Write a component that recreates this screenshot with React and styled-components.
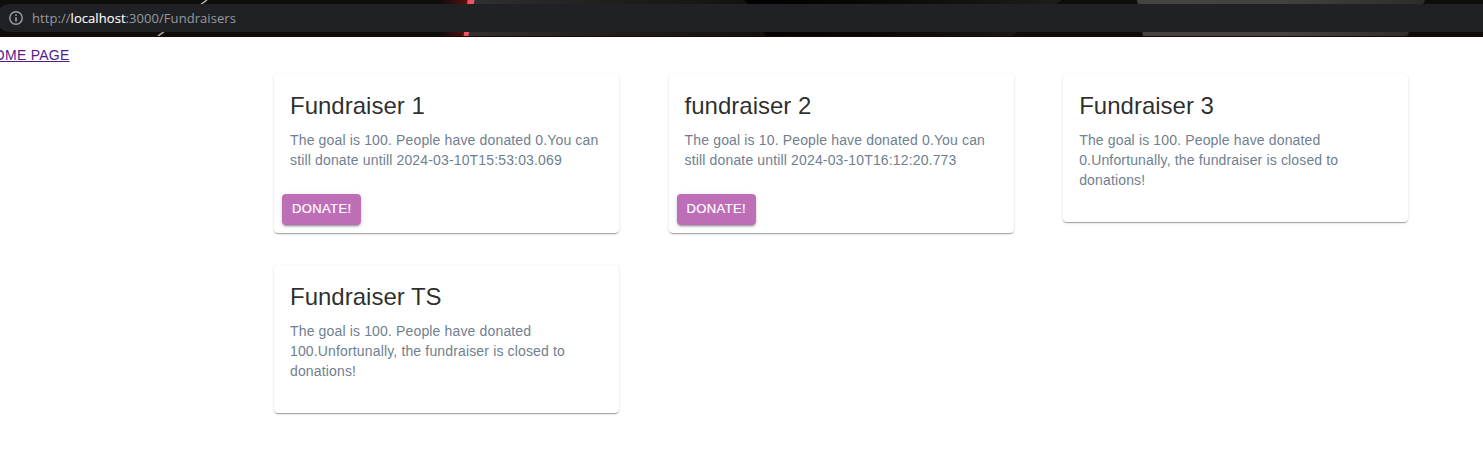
import React from "react";
import styled, { createGlobalStyle } from "styled-components";

const GlobalStyle = createGlobalStyle`
  * { box-sizing: border-box; }
  body {
    margin: 0;
    background: #fff;
    overflow: hidden;
    font-family: "Liberation Sans", Arial, sans-serif;
  }
`;

const BrowserBar = styled.header`
  position: relative;
  height: 37px;
  padding: 4px 0;
  background: #0d0d0c;
  border-bottom: 1px solid #240202;
  overflow: hidden;
`;

const ThemeArt = styled.svg`
  position: absolute;
  inset: 0;
  display: block;
`;

const AddressField = styled.div`
  position: relative;
  display: flex;
  align-items: center;
  height: 28px;
  margin-left: -4px;
  padding-left: 12px;
  border-radius: 14px 0 0 14px;
  background: #202124;
`;

const InfoIcon = styled.svg`
  display: block;
  width: 16px;
  height: 16px;
  margin-right: 8px;
`;

const Url = styled.span`
  font: 13px/18px "Open Sans", "Noto Sans", sans-serif;
  letter-spacing: 0.06px;
  color: #969a9e;
  white-space: nowrap;
`;

const Host = styled.span`
  color: #fff;
  -webkit-text-stroke: 0.1px #fff;
`;

const HomeLink = styled.a`
  display: block;
  width: max-content;
  margin: 8px 0 0 -16.5px;
  font-size: 14px;
  line-height: 20px;
  letter-spacing: 0.25px;
  color: #551a8b;
  text-decoration: underline;
`;

const CardGrid = styled.main`
  display: grid;
  grid-template-columns: repeat(3, 345px);
  grid-auto-rows: 159px;
  column-gap: 49.6px;
  row-gap: 32px;
  align-items: start;
  margin: 9px 0 0 274px;
`;

const Card = styled.article`
  border-radius: 4px;
  background: #fff;
  box-shadow: 0 2px 1px -1px rgba(0, 0, 0, 0.2), 0 1px 1px 0 rgba(0, 0, 0, 0.14),
    0 1px 3px 0 rgba(0, 0, 0, 0.12);
`;

const CardContent = styled.div`
  padding: 16px;
`;

const Title = styled.h2`
  margin: 0 0 0.35em;
  font-size: 24px;
  font-weight: 400;
  line-height: 1.334;
  color: rgba(0, 0, 0, 0.84);
`;

const Description = styled.p`
  margin: 0;
  font-size: 14px;
  line-height: 1.43;
  letter-spacing: 0.01071em;
  color: #708090;
`;

const CardActions = styled.div`
  display: flex;
  align-items: center;
  padding: 8px;
`;

const DonateButton = styled.button`
  min-width: 64px;
  padding: 3.500px 10px 4.500px;
  border: 0;
  border-radius: 4px;
  background: #be6db7;
  color: #fff;
  font-family: inherit;
  font-size: 13px;
  font-weight: 500;
  line-height: 1.75;
  letter-spacing: 0.02857em;
  text-transform: uppercase;
  -webkit-text-stroke: 0.2px #fff;
  box-shadow: 0 3px 1px -2px rgba(0, 0, 0, 0.2), 0 2px 2px 0 rgba(0, 0, 0, 0.14),
    0 1px 5px 0 rgba(0, 0, 0, 0.12);
`;

const fundraisers = [
  { name: "Fundraiser 1", goal: 100, donated: 0, until: "2024-03-10T15:53:03.069" },
  { name: "fundraiser 2", goal: 10, donated: 0, until: "2024-03-10T16:12:20.773" },
  { name: "Fundraiser 3", goal: 100, donated: 0 },
  { name: "Fundraiser TS", goal: 100, donated: 100 },
];

function FundraiserCard({ name, goal, donated, until }) {
  const status = until
    ? `You can still donate untill ${until}`
    : "Unfortunally, the fundraiser is closed to donations!";
  return (
    <Card>
      <CardContent>
        <Title>{name}</Title>
        <Description>{`The goal is ${goal}. People have donated ${donated}.${status}`}</Description>
      </CardContent>
      <CardActions>{until && <DonateButton>Donate!</DonateButton>}</CardActions>
    </Card>
  );
}

export default function App() {
  return (
    <>
      <GlobalStyle />
      <BrowserBar>
        <ThemeArt width="1483" height="36" viewBox="0 0 1483 36" aria-hidden="true">
          <defs>
            <linearGradient id="red" x1="0" x2="1">
              <stop offset="0" stopColor="#5a1011" stopOpacity="0" />
              <stop offset="1" stopColor="#5a1011" />
            </linearGradient>
            <linearGradient id="grey" x1="0" x2="1">
              <stop offset="0" stopColor="#303030" />
              <stop offset="0.5" stopColor="#1e1e1d" />
              <stop offset="1" stopColor="#11110f" />
            </linearGradient>
            <linearGradient id="dark" x1="0" x2="1">
              <stop offset="0" stopColor="#010101" />
              <stop offset="0.4" stopColor="#080806" />
              <stop offset="1" stopColor="#1d1d1b" />
            </linearGradient>
            <linearGradient id="steel" x1="0" x2="1">
              <stop offset="0" stopColor="#444442" />
              <stop offset="0.5" stopColor="#424240" />
              <stop offset="1" stopColor="#2c2c2a" />
            </linearGradient>
          </defs>
          <path d="M440 0H468L463 36H440Z" fill="url(#red)" />
          <path d="M473 0H745L766 36H468Z" fill="url(#grey)" />
          <path d="M745 0H1062L1012 36H766Z" fill="url(#dark)" />
          <path d="M1137 0H1425L1407 36H1143Z" fill="url(#steel)" />
          <path d="M467.500 0H474.500L468.500 36H463.500Z" fill="#f05167" />
          <path d="M207 0L158 36" stroke="#b5b5b3" strokeWidth="1.5" />
        </ThemeArt>
        <AddressField>
          <InfoIcon viewBox="0 0 16 16" fill="none" aria-hidden="true">
            <circle cx="8" cy="8" r="6.200" stroke="#9aa0a6" strokeWidth="1.400" />
            <path d="M8 7.200V11.400M8 4.600V6.100" stroke="#9aa0a6" strokeWidth="1.700" />
          </InfoIcon>
          <Url>
            http://<Host>localhost</Host>:3000/Fundraisers
          </Url>
        </AddressField>
      </BrowserBar>
      <HomeLink href="#home">HOME PAGE</HomeLink>
      <CardGrid>
        {fundraisers.map((item) => (
          <FundraiserCard key={item.name} {...item} />
        ))}
      </CardGrid>
    </>
  );
}
